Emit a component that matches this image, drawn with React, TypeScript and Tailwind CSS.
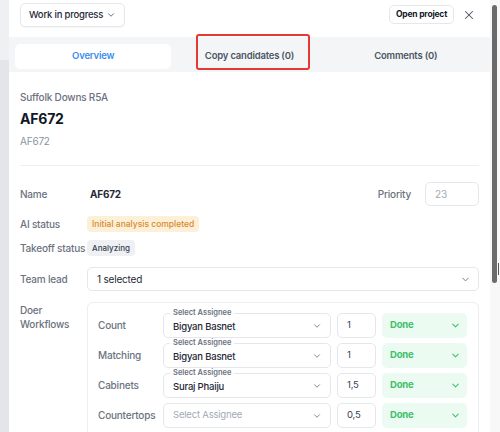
import { ChevronDown, X } from "lucide-react";

type Workflow = {
  name: string;
  assignee: string | null;
  qty: string;
};

const workflows: Workflow[] = [
  { name: "Count", assignee: "Bigyan Basnet", qty: "1" },
  { name: "Matching", assignee: "Bigyan Basnet", qty: "1" },
  { name: "Cabinets", assignee: "Suraj Phaiju", qty: "1,5" },
  { name: "Countertops", assignee: null, qty: "0,5" },
];

const tabs = ["Overview", "Copy candidates (0)", "Comments (0)"];

const AssigneeSelect = ({ value }: { value: string | null }) => (
  <div className="relative flex h-[25px] w-[168px] items-center rounded-[5px] border border-[#e5e7eb] bg-white pl-[9px] pr-[8px]">
    {value ? (
      <>
        <span className="absolute -top-[6px] left-[6px] bg-white px-[3px] text-[7.5px] leading-[10px] font-semibold tracking-normal text-[#6b7280]">
          Select Assignee
        </span>
        <span className="flex-1 pt-[3px] text-[9.5px] font-medium text-[#1f2937]">{value}</span>
      </>
    ) : (
      <span className="flex-1 text-[9.5px] text-[#a3aab5]">Select Assignee</span>
    )}
    <ChevronDown size={10} strokeWidth={2} className="text-[#6b7280]" />
  </div>
);

const WorkflowRow = ({ flow }: { flow: Workflow }) => (
  <div className="flex h-[25px] items-center">
    <span className="w-[65px] text-[10px] font-medium text-[#6b7280]">{flow.name}</span>
    <AssigneeSelect value={flow.assignee} />
    <div className="ml-[6px] flex h-[25px] w-[39px] items-center rounded-[5px] border border-[#e5e7eb] bg-white pl-[9px] text-[9.5px] text-[#374151]">
      {flow.qty}
    </div>
    <div className="ml-[6px] flex h-[25px] w-[85px] items-center rounded-[5px] bg-[#ecfbf1] pl-[8px] pr-[6px]">
      <span className="flex-1 text-[9.5px] font-bold text-[#3cc06a]">Done</span>
      <ChevronDown size={11} strokeWidth={2.2} className="text-[#3cc06a]" />
    </div>
  </div>
);

const App = () => {
  return (
    <div className="flex h-[432px] w-[500px] overflow-hidden bg-white font-['Inter',sans-serif] tracking-[-0.2px]">
      {/* backdrop sliver */}
      <div className="flex w-[9px] flex-col">
        <div className="h-[60px] bg-[#eff0f2]" />
        <div className="flex-1 bg-[#e3e5e9]" />
      </div>

      {/* drawer */}
      <div className="relative flex w-[481px] flex-col bg-white">
        <div className="flex items-start px-[11px] pt-[3px]">
          <div className="flex h-[24px] w-[105px] items-center rounded-[5px] border border-[#e5e7eb] bg-white pl-[8px] pr-[8px] shadow-[0_1px_1px_rgba(0,0,0,0.03)]">
            <span className="flex-1 text-[9.5px] font-medium text-[#1f2937]">Work in progress</span>
            <ChevronDown size={10} strokeWidth={2} className="text-[#4b5563]" />
          </div>
          <div className="flex-1" />
          <div className="mt-[2px] flex h-[19px] w-[65px] items-center justify-center rounded-[5px] border border-[#e5e7eb] text-[8.5px] font-bold text-[#111827]">
            Open project
          </div>
          <X size={14} strokeWidth={1.8} className="mt-[5px] ml-[8px] mr-[3px] text-[#4b5563]" />
        </div>

        <div className="mt-[10px] grid grid-cols-3 bg-[#f4f5f7] px-[6px] pt-[7px] pb-[3px]">
          {tabs.map((tab, i) => (
            <div
              key={tab}
              className={
                i === 0
                  ? "flex h-[25px] items-center justify-center rounded-[5px] bg-white text-[9.5px] font-semibold text-[#3b8df0]"
                  : "flex h-[25px] items-center justify-center text-[9.5px] font-semibold text-[#4b5563]"
              }
            >
              {tab}
            </div>
          ))}
        </div>
        <div className="absolute top-[34px] left-[187px] h-[36px] w-[114px] rounded-[3px] border-2 border-[#e53935]" />

        <div className="flex flex-col px-[11px]">
          <p className="mt-[18px] text-[10px] leading-[14px] font-medium text-[#6b7280]">Suffolk Downs R5A</p>
          <h1 className="mt-[5px] text-[14px] leading-[20px] font-bold text-[#111827]">AF672</h1>
          <p className="mt-[5px] text-[10px] leading-[14px] text-[#8b93a0]">AF672</p>
          <div className="mt-[17px] h-px bg-[#eceef1]" />

          <div className="mt-[16px] flex h-[24px] items-center">
            <span className="w-[67px] text-[10px] font-medium text-[#6b7280]">Name</span>
            <span className="pl-[3px] text-[10px] font-bold text-[#1f2937]">AF672</span>
            <div className="flex-1" />
            <span className="mr-[14px] text-[10px] font-medium text-[#6b7280]">Priority</span>
            <div className="flex h-[24px] w-[54px] items-center rounded-[5px] border border-[#e5e7eb] pl-[9px] text-[10px] text-[#a3aab5]">
              23
            </div>
          </div>

          <div className="mt-[10px] flex h-[16px] items-center">
            <span className="w-[67px] text-[10px] font-medium text-[#6b7280]">AI status</span>
            <span className="rounded-[4px] bg-[#fdf0d9] px-[5px] text-[8.5px] leading-[16px] font-medium tracking-normal text-[#d98a2b]">
              Initial analysis completed
            </span>
          </div>

          <div className="mt-[8px] flex h-[16px] items-center">
            <span className="w-[67px] text-[10px] font-medium whitespace-nowrap text-[#6b7280]">Takeoff status</span>
            <span className="rounded-[4px] bg-[#eef0f3] px-[5px] text-[8px] leading-[16px] font-medium tracking-normal text-[#374151]">
              Analyzing
            </span>
          </div>

          <div className="mt-[11px] flex h-[24px] items-center">
            <span className="w-[67px] text-[10px] font-medium text-[#6b7280]">Team lead</span>
            <div className="flex h-[24px] flex-1 items-center rounded-[5px] border border-[#e5e7eb] pl-[9px] pr-[7px]">
              <span className="flex-1 text-[10px] text-[#1f2937]">1 selected</span>
              <ChevronDown size={11} strokeWidth={2} className="text-[#6b7280]" />
            </div>
          </div>

          <div className="mt-[11px] flex">
            <span className="w-[67px] pt-[1px] text-[10px] leading-[14px] font-medium text-[#6b7280]">
              Doer
              <br />
              Workflows
            </span>
            <div className="flex flex-1 flex-col gap-[5px] rounded-[6px] border border-[#eceef1] pt-[10px] pb-[12px] pl-[10px]">
              {workflows.map((flow) => (
                <WorkflowRow key={flow.name} flow={flow} />
              ))}
            </div>
          </div>
        </div>
      </div>

      {/* scroll track */}
      <div className="relative w-[10px] bg-[#f8f8f9]">
        <div className="mt-[5px] ml-[2px] h-[278px] w-[5px] rounded-full bg-[#6b6b6b]" />
        <div className="absolute top-[263px] left-[8px] h-[12px] w-[1px] bg-[#555]" />
      </div>
    </div>
  );
};

export default App;
